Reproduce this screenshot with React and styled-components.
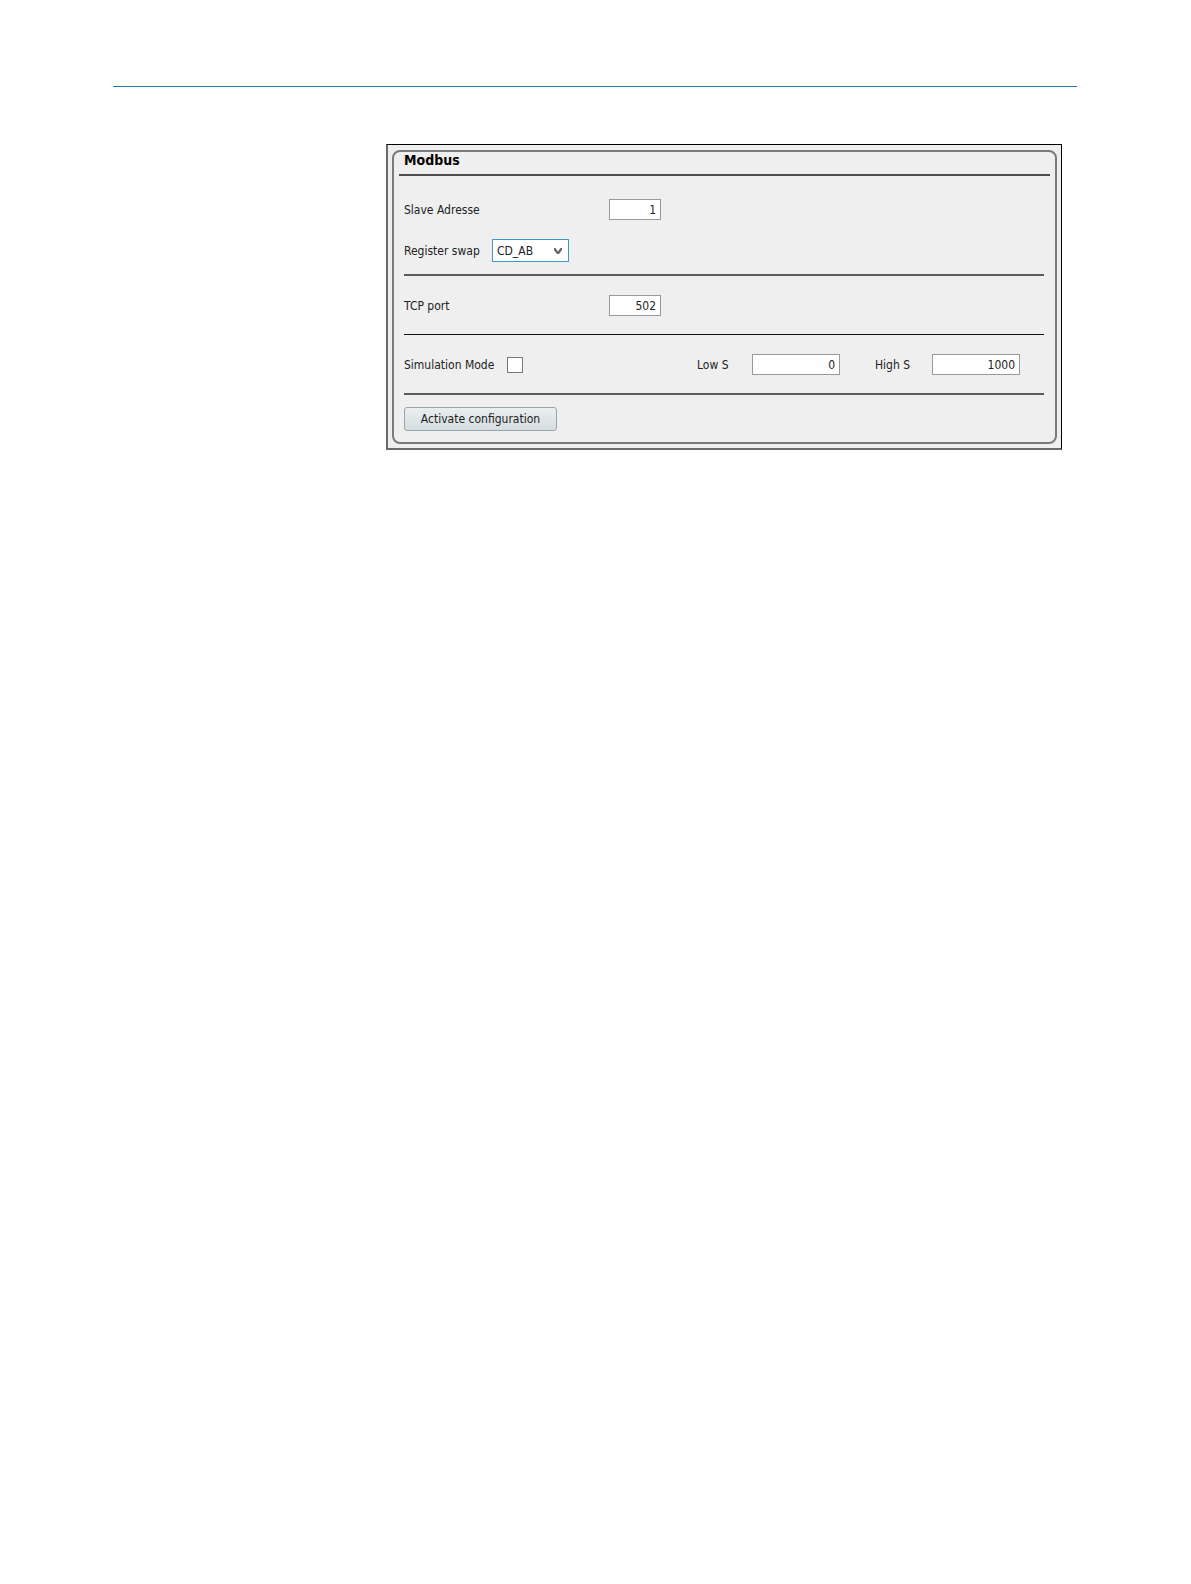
import React, { useState } from 'react';
import styled, { createGlobalStyle } from 'styled-components';

const App = () => {
  const [slave, setSlave] = useState('1');
  const [swap, setSwap] = useState('CD_AB');
  const [port, setPort] = useState('502');
  const [simulation, setSimulation] = useState(false);
  const [low, setLow] = useState('0');
  const [high, setHigh] = useState('1000');

  const handleSubmit = (e) => {
    e.preventDefault();
  };

  return (
    <Page>
      <GlobalStyle />
      <HeaderRule />
      <Frame>
        <Panel onSubmit={handleSubmit}>
          <Title>Modbus</Title>
          <Section $first>
            <Row>
              <Label htmlFor="slave" $width={205}>Slave Adresse</Label>
              <NumberInput id="slave" $width={52} value={slave} onChange={(e) => setSlave(e.target.value)} />
            </Row>
            <Row>
              <Label htmlFor="swap" $width={88}>Register swap</Label>
              <SelectBox>
                <Select id="swap" value={swap} onChange={(e) => setSwap(e.target.value)}>
                  <option>AB_CD</option>
                  <option>CD_AB</option>
                </Select>
                <Arrow viewBox="0 0 10 8" aria-hidden="true">
                  <path d="M1 1 L2.5 1 L5 4.5 L7.5 1 L9 1 L9 3 L6 7 L4 7 L1 3 Z" />
                </Arrow>
              </SelectBox>
            </Row>
          </Section>
          <Section $thin>
            <Row>
              <Label htmlFor="port" $width={205}>TCP port</Label>
              <NumberInput id="port" $width={52} value={port} onChange={(e) => setPort(e.target.value)} />
            </Row>
          </Section>
          <Section>
            <Row>
              <Label htmlFor="simulation" $width={103}>Simulation Mode</Label>
              <Checkbox
                id="simulation"
                type="checkbox"
                checked={simulation}
                onChange={(e) => setSimulation(e.target.checked)}
              />
              <Range>
                <Label htmlFor="low" $width={55}>Low S</Label>
                <NumberInput id="low" $width={88} value={low} onChange={(e) => setLow(e.target.value)} />
              </Range>
              <Range>
                <Label htmlFor="high" $width={57}>High S</Label>
                <NumberInput id="high" $width={88} value={high} onChange={(e) => setHigh(e.target.value)} />
              </Range>
            </Row>
          </Section>
          <Actions>
            <Button type="submit">Activate configuration</Button>
          </Actions>
        </Panel>
      </Frame>
    </Page>
  );
};

export default App;

const GlobalStyle = createGlobalStyle`
  * {
    box-sizing: border-box;
  }

  body {
    margin: 0;
    background: #fff;
  }

  body, input, select, button {
    font-family: Tahoma, "DejaVu Sans Condensed", "DejaVu Sans", sans-serif;
    font-size: 12px;
    color: #222;
  }
`;

const Page = styled.main`
  padding: 86px 114px 40px 113px;
`;

const HeaderRule = styled.hr`
  height: 1px;
  margin: 0 0 57px;
  border: 0;
  background: #1d7c9b;
`;

const Frame = styled.section`
  margin: 0 15px 0 273px;
  padding: 5px 4px 4px;
  border: solid;
  border-width: 1px 1px 2px 2px;
  border-color: #000 #000 #6a6a6a #6a6a6a;
  background: #efefef;
`;

const Panel = styled.form`
  border: 2px solid #7a7a7a;
  border-radius: 8px;
`;

const Title = styled.h1`
  margin: 0 5px;
  padding: 0 5px 5px;
  border-bottom: 2px solid #4d4d4d;
  font-size: 14px;
  line-height: 17px;
  color: #000;
`;

const Section = styled.div`
  display: flex;
  flex-direction: column;
  gap: 19px;
  margin: 0 11px 0 10px;
  padding: ${({ $first }) => ($first ? '23px 0 12px' : '19px 0 18px')};
  border-bottom: ${({ $thin }) => ($thin ? '1px solid #111' : '2px solid #5c5c5c')};
`;

const Row = styled.div`
  display: flex;
  align-items: center;
`;

const Label = styled.label`
  flex: none;
  width: ${({ $width }) => $width}px;
  line-height: 18px;
`;

const NumberInput = styled.input`
  width: ${({ $width }) => $width}px;
  height: 21px;
  padding: 0 4px;
  border: 1px solid #999;
  background: #fff;
  text-align: right;
`;

const SelectBox = styled.div`
  display: grid;
  align-items: center;
  width: 77px;
`;

const Select = styled.select`
  grid-area: 1 / 1;
  height: 23px;
  padding: 0 4px;
  border: 1px solid #3d97cb;
  border-radius: 0;
  outline: 0;
  background: #fff;
  appearance: none;
`;

const Arrow = styled.svg`
  grid-area: 1 / 1;
  justify-self: end;
  width: 10px;
  height: 8px;
  margin-right: 6px;
  fill: #666;
  pointer-events: none;
`;

const Checkbox = styled.input`
  width: 16px;
  height: 16px;
  margin: 0 auto 0 0;
  border: 1px solid #777;
  background: #fff;
  appearance: none;

  &:checked {
    background: #3d97cb;
  }
`;

const Range = styled.div`
  display: flex;
  align-items: center;
  margin-right: 24px;

  & + & {
    margin-left: 11px;
  }
`;

const Actions = styled.div`
  padding: 12px 10px 11px;
`;

const Button = styled.button`
  display: block;
  width: 153px;
  height: 24px;
  padding: 0;
  border: 1px solid #9aa5ab;
  border-radius: 3px;
  background: linear-gradient(#eaeeee, #d5dee1);
  cursor: pointer;
`;
